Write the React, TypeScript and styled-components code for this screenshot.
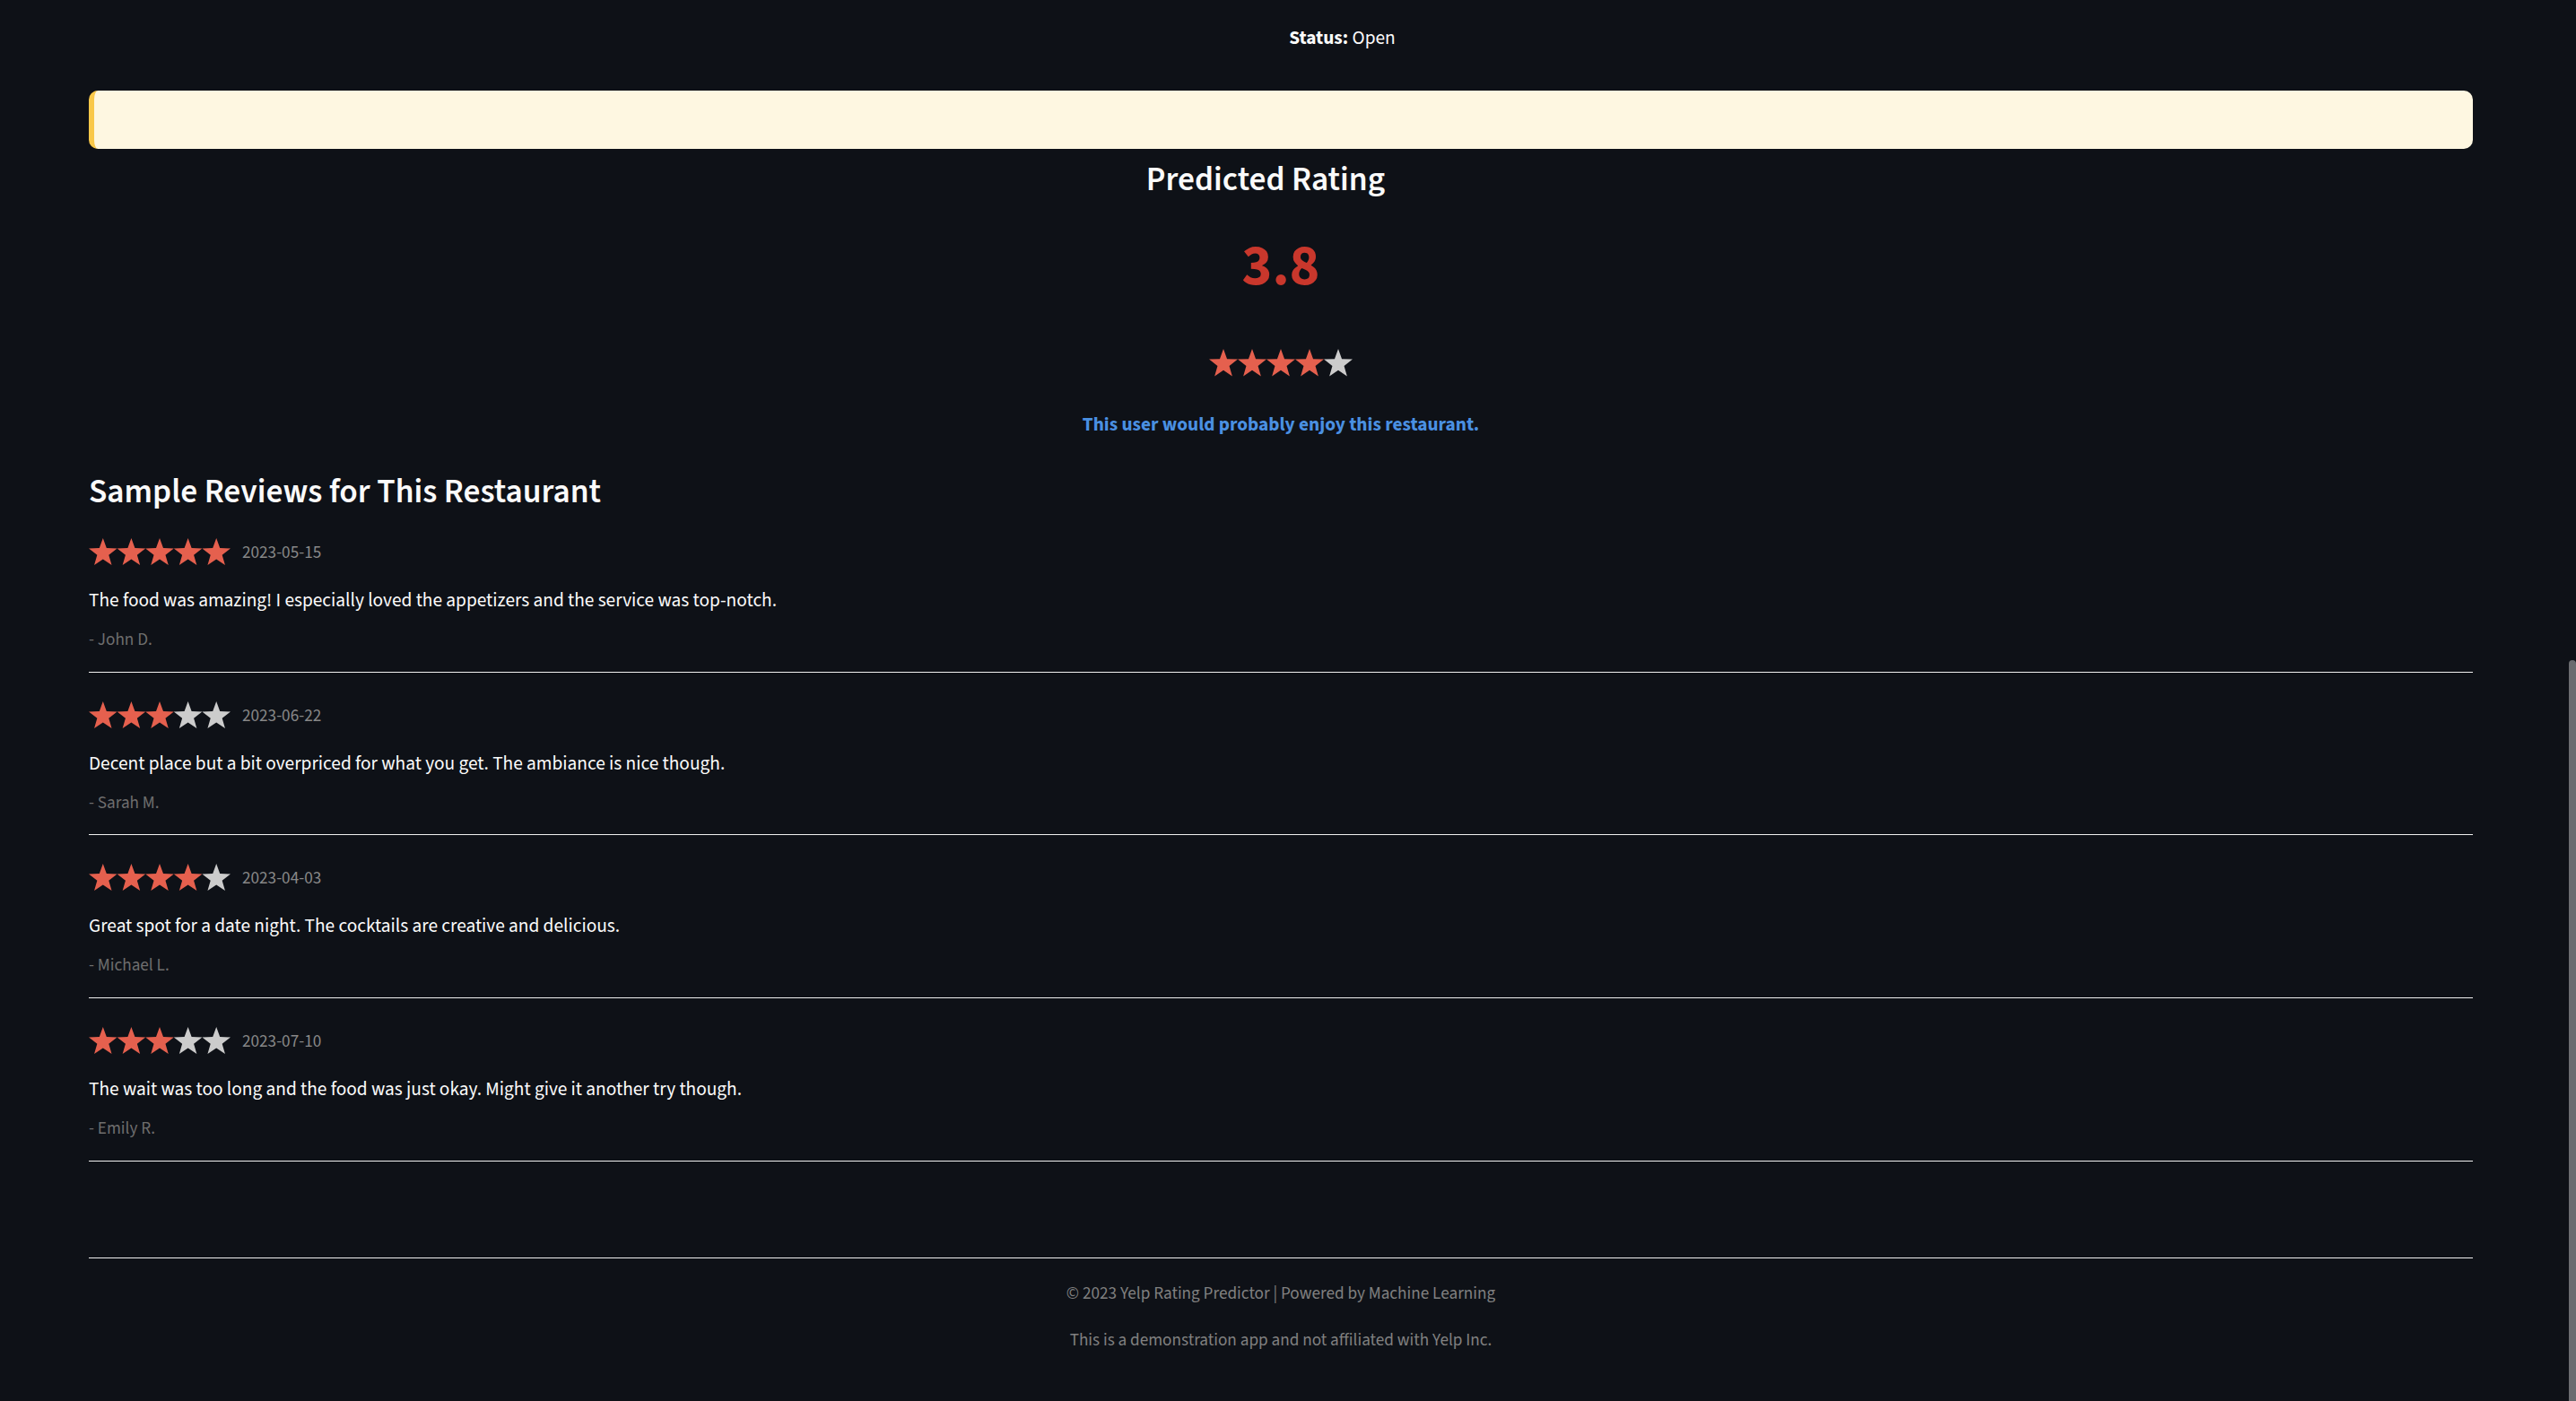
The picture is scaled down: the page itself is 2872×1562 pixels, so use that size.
import React from "react";
import styled, { createGlobalStyle } from "styled-components";

const GlobalStyle = createGlobalStyle`
  html, body { margin: 0; padding: 0; background: #0e1117; }
  body { font-family: "Source Sans 3", Lato, sans-serif; color: #fafafa; overflow: hidden; }
`;

const Page = styled.div`
  padding: 0 115px 0 99px;
  min-height: 100vh;
  box-sizing: border-box;
  display: flex;
  flex-direction: column;
`;

const StatusLine = styled.div`
  margin-top: 27.3px;
  font-size: 21.33px;
  line-height: 32px;
  text-align: center;
  padding-left: 137px;
  b { font-weight: 700; }
`;

const Alert = styled.div`
  margin-top: 41.7px;
  height: 65px;
  border-radius: 10px;
  background: #fef7e1;
  border-left: 6px solid #f9c84a;
  box-sizing: border-box;
`;

const Title = styled.h2`
  margin: 11px 0 0;
  font-size: 37.33px;
  line-height: 48px;
  font-weight: 600;
  color: #fafafa;
  text-align: center;
  padding-right: 34px;
`;

const Score = styled.div`
  margin-top: 32px;
  font-size: 64px;
  line-height: 80px;
  font-weight: 700;
  color: #c9372c;
  text-align: center;
`;

const StarRow = styled.div`
  margin-top: 52px;
  display: flex;
  justify-content: center;
`;

const Verdict = styled.div`
  margin-top: 37.3px;
  font-size: 21.33px;
  line-height: 32px;
  font-weight: 700;
  color: #4a90e2;
  text-align: center;
`;

const SectionTitle = styled.h3`
  margin: 35px 0 0;
  font-size: 37.33px;
  line-height: 48px;
  font-weight: 600;
  color: #fafafa;
`;

const ReviewList = styled.div`
  margin-top: 26.65px;
  display: flex;
  flex-direction: column;
`;

const Review = styled.div`
  display: flex;
  flex-direction: column;
  & + & { margin-top: 32px; }
`;

const ReviewHead = styled.div`
  display: flex;
  align-items: center;
  gap: 13px;
  height: 32px;
`;

const DateText = styled.span`
  font-size: 19.2px;
  color: #888888;
`;

const Body = styled.p`
  margin: 21.8px 0 0;
  font-size: 21.33px;
  line-height: 32px;
  color: #fafafa;
`;

const Author = styled.p`
  margin: 13.2px 0 0;
  font-size: 19.2px;
  line-height: 28px;
  color: #6e6e6e;
`;

const Divider = styled.hr<{ $gap: number }>`
  margin: ${(p) => p.$gap}px 0 0;
  border: none;
  border-top: 1px solid #f0f0f0;
  height: 0;
`;

const Footer = styled.footer`
  display: flex;
  flex-direction: column;
  align-items: center;
`;

const FooterText = styled.p<{ $gap: number }>`
  margin: ${(p) => p.$gap}px 0 0;
  font-size: 19.2px;
  line-height: 28px;
  color: #808080;
`;

const ScrollThumb = styled.div`
  position: fixed;
  right: 0;
  top: 736px;
  bottom: 0;
  width: 8px;
  border-radius: 4px 4px 0 0;
  background: #6b6c70;
`;

function starPoints(cx: number, cy: number, R: number, r: number) {
  const pts: string[] = [];
  for (let k = 0; k < 10; k++) {
    const a = ((-90 + 36 * k) * Math.PI) / 180;
    const rad = k % 2 === 0 ? R : r;
    pts.push(`${(cx + rad * Math.cos(a)).toFixed(2)},${(cy + rad * Math.sin(a)).toFixed(2)}`);
  }
  return pts.join(" ");
}

const Stars: React.FC<{ filled: number; cell?: number }> = ({ filled, cell = 31.6 }) => {
  const R = cell * 0.525;
  const r = R * 0.41;
  const h = 32;
  return (
    <svg width={cell * 5} height={h} viewBox={`0 0 ${cell * 5} ${h}`}>
      {[0, 1, 2, 3, 4].map((i) => (
        <polygon
          key={i}
          points={starPoints(cell * i + cell / 2, R, R, r)}
          fill={i < filled ? "#e5604e" : "#cccccc"}
        />
      ))}
    </svg>
  );
};

const reviews = [
  { stars: 5, date: "2023-05-15", text: "The food was amazing! I especially loved the appetizers and the service was top-notch.", author: "- John D." },
  { stars: 3, date: "2023-06-22", text: "Decent place but a bit overpriced for what you get. The ambiance is nice though.", author: "- Sarah M." },
  { stars: 4, date: "2023-04-03", text: "Great spot for a date night. The cocktails are creative and delicious.", author: "- Michael L." },
  { stars: 3, date: "2023-07-10", text: "The wait was too long and the food was just okay. Might give it another try though.", author: "- Emily R." },
];

export default function App() {
  return (
    <>
      <GlobalStyle />
      <Page>
        <StatusLine>
          <b>Status:</b> Open
        </StatusLine>
        <Alert />
        <Title>Predicted Rating</Title>
        <Score>3.8</Score>
        <StarRow>
          <Stars filled={4} cell={32} />
        </StarRow>
        <Verdict>This user would probably enjoy this restaurant.</Verdict>
        <SectionTitle>Sample Reviews for This Restaurant</SectionTitle>
        <ReviewList>
          {reviews.map((r) => (
            <Review key={r.date}>
              <ReviewHead>
                <Stars filled={r.stars} />
                <DateText>{r.date}</DateText>
              </ReviewHead>
              <Body>{r.text}</Body>
              <Author>{r.author}</Author>
              <Divider $gap={21.8} />
            </Review>
          ))}
        </ReviewList>
        <Divider $gap={107} />
        <Footer>
          <FooterText $gap={24.5}>© 2023 Yelp Rating Predictor | Powered by Machine Learning</FooterText>
          <FooterText $gap={24}>This is a demonstration app and not affiliated with Yelp Inc.</FooterText>
        </Footer>
      </Page>
      <ScrollThumb />
    </>
  );
}
